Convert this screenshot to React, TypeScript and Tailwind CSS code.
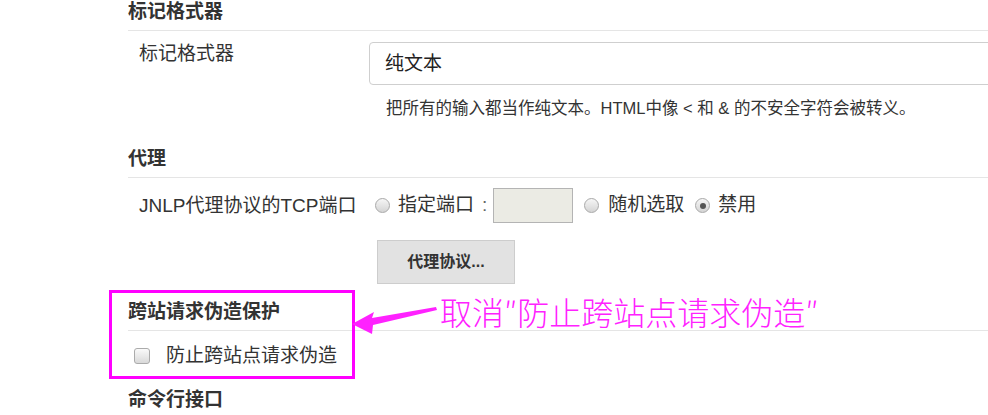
import React from 'react'

const font = "font-['Liberation_Sans','Noto_Sans_CJK_SC',sans-serif]"

function Radio({ checked = false }: { checked?: boolean }) {
  return (
    <span className="w-[15px] h-[15px] shrink-0 rounded-full border border-[#a9a9a9] bg-linear-to-b from-[#f6f6f6] to-[#d4d4d4] flex items-center justify-center">
      {checked && <span className="w-[6px] h-[6px] rounded-full bg-[#555]" />}
    </span>
  )
}

function SectionHeading({ children, className = '' }: { children: React.ReactNode; className?: string }) {
  return (
    <div className={`h-[31px] border-b border-[#e5e5e5] ${className}`}>
      <h2 className="text-[19px] leading-[24px] font-bold text-[#333]">{children}</h2>
    </div>
  )
}

export default function App() {
  return (
    <div className={`relative w-[988px] h-[415px] overflow-hidden bg-white pl-[128px] text-[#333] ${font}`}>
      {/* 标记格式器 */}
      <SectionHeading>标记格式器</SectionHeading>
      <div className="flex mt-[11px]">
        <div className="w-[241px] shrink-0 pl-[11px] text-[19px] leading-[24px]">标记格式器</div>
        <div className="w-[640px] shrink-0 h-[43px] border border-[#cfcfcf] rounded-[4px] pl-[15px] pt-[2px] flex items-center text-[19px] text-[#222]">
          纯文本
        </div>
      </div>
      <div className="mt-[13px] pl-[258px] text-[16.5px] leading-[20px] whitespace-nowrap">
        把所有的输入都当作纯文本。HTML中像 &lt; 和 &amp; 的不安全字符会被转义。
      </div>

      {/* 代理 */}
      <SectionHeading className="mt-[29px]">代理</SectionHeading>
      <div className="flex items-center h-[35px] mt-[10px] text-[19px] whitespace-nowrap">
        <div className="w-[241px] shrink-0 pl-[11px] leading-[24px]">JNLP代理协议的TCP端口</div>
        <span className="ml-[6px]"><Radio /></span>
        <span className="ml-[8px]">指定端口</span>
        <span className="ml-[8px] text-[#666]">:</span>
        <div className="ml-[6px] w-[80px] h-[35px] border border-[#b4b4b4] bg-[#ebebe4]" />
        <span className="ml-[11px]"><Radio /></span>
        <span className="ml-[9px]">随机选取</span>
        <span className="ml-[11px]"><Radio checked /></span>
        <span className="ml-[8px]">禁用</span>
      </div>
      <button className="mt-[17px] ml-[249px] w-[138px] h-[44px] bg-[#e2e2e2] border border-[#cdcdcd] text-[16px] font-bold text-[#333] flex items-center justify-center">
        代理协议...
      </button>

      {/* 跨站请求伪造保护 */}
      <SectionHeading className="mt-[16px]">跨站请求伪造保护</SectionHeading>
      <div className="flex items-center h-[24px] mt-[13px]">
        <span className="ml-[6px] w-[16px] h-[16px] rounded-[3px] border border-[#ababab] bg-linear-to-b from-[#fafafa] to-[#d9d9d9]" />
        <span className="ml-[16px] text-[19px] leading-[24px]">防止跨站点请求伪造</span>
      </div>

      {/* 命令行接口 */}
      <h2 className="mt-[20px] text-[19px] leading-[24px] font-bold text-[#333]">命令行接口</h2>

      {/* annotation */}
      <div className="absolute left-[109px] top-[290px] w-[246px] h-[89px] border-[3px] border-[#ff00ff]" />
      <svg className="absolute left-[340px] top-[290px]" width="110" height="50" viewBox="0 0 110 50">
        <polygon points="12,34 34,22 32,28 96,17 97,20 33,35 32,44" fill="#ff22ff" />
      </svg>
      <div className="absolute left-[440px] top-[291px] text-[32px] leading-[40px] font-light text-[#ff22ff] whitespace-nowrap font-['Noto_Sans_CJK_SC',sans-serif]">
        取消″防止跨站点请求伪造″
      </div>
    </div>
  )
}
